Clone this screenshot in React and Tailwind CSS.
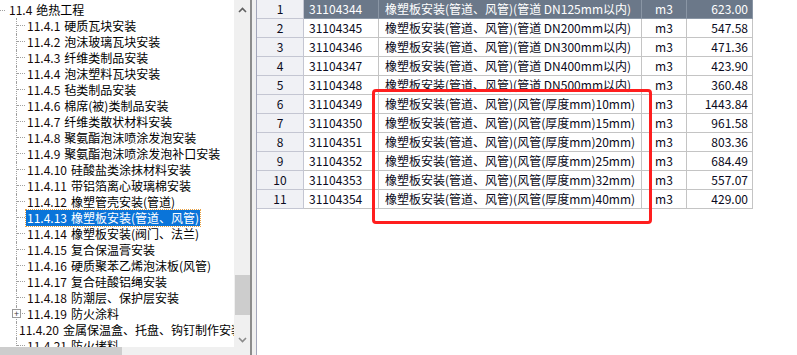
import React from "react";

const treeItems = [
    ["11.4.1", "硬质瓦块安装"],
    ["11.4.2", "泡沫玻璃瓦块安装"],
    ["11.4.3", "纤维类制品安装"],
    ["11.4.4", "泡沫塑料瓦块安装"],
    ["11.4.5", "毡类制品安装"],
    ["11.4.6", "棉席(被)类制品安装"],
    ["11.4.7", "纤维类散状材料安装"],
    ["11.4.8", "聚氨酯泡沫喷涂发泡安装"],
    ["11.4.9", "聚氨酯泡沫喷涂发泡补口安装"],
    ["11.4.10", "硅酸盐类涂抹材料安装"],
    ["11.4.11", "带铝箔离心玻璃棉安装"],
    ["11.4.12", "橡塑管壳安装(管道)"],
    ["11.4.13", "橡塑板安装(管道、风管)"],
    ["11.4.14", "橡塑板安装(阀门、法兰)"],
    ["11.4.15", "复合保温膏安装"],
    ["11.4.16", "硬质聚苯乙烯泡沫板(风管)"],
    ["11.4.17", "复合硅酸铝绳安装"],
    ["11.4.18", "防潮层、保护层安装"],
    ["11.4.19", "防火涂料"],
    ["11.4.20", "金属保温盒、托盘、钩钉制作安装"],
    ["11.4.21", "防火堵料"],
];

const base = "橡塑板安装(管道、风管)";
const rows = [
    [1, "31104344", base + "(管道 DN125mm以内)", "623.00"],
    [2, "31104345", base + "(管道 DN200mm以内)", "547.58"],
    [3, "31104346", base + "(管道 DN300mm以内)", "471.36"],
    [4, "31104347", base + "(管道 DN400mm以内)", "423.90"],
    [5, "31104348", base + "(管道 DN500mm以内)", "360.48"],
    [6, "31104349", base + "(风管(厚度mm)10mm)", "1443.84"],
    [7, "31104350", base + "(风管(厚度mm)15mm)", "961.58"],
    [8, "31104351", base + "(风管(厚度mm)20mm)", "803.36"],
    [9, "31104352", base + "(风管(厚度mm)25mm)", "684.49"],
    [10, "31104353", base + "(风管(厚度mm)32mm)", "557.07"],
    [11, "31104354", base + "(风管(厚度mm)40mm)", "429.00"],
];

function TreeRow({ code, name, selected, expandable }) {
    return (
        <div className="flex h-[16px] items-stretch">
            <div className="relative ml-[16px] flex w-[9px] flex-col border-l border-dotted border-[#a0a0a0]">
                <div className="h-[8px] border-b border-dotted border-[#a0a0a0]"></div>
                {expandable && (
                    <div className="absolute left-[-5px] top-[3px] flex h-[9px] w-[9px] items-center justify-center border border-[#9a9a9a] bg-white text-[9px] leading-none text-[#404040]">
                        +
                    </div>
                )}
            </div>
            <div
                className={
                    selected
                        ? "ml-[1px] flex items-center whitespace-nowrap bg-[#0a74d9] px-[1px] text-white outline outline-1 outline-dotted outline-[#e8a040]"
                        : "ml-[2px] flex items-center whitespace-nowrap text-[#140808]"
                }
            >
                <span>{code}</span>
                <span className={selected ? "ml-[4px] text-white" : "ml-[4px] text-black"}>{name}</span>
            </div>
        </div>
    );
}

function App() {
    return (
        <div className="flex h-[355px] w-[797px] overflow-hidden bg-white font-['Noto_Sans_CJK_SC',sans-serif] text-[12px] leading-none">
            {/* left tree panel */}
            <div className="flex w-[250px] flex-col">
                <div className="flex min-h-0 flex-1">
                    <div className="w-[234px] overflow-hidden pt-[2px]">
                        <div className="flex h-[16px] items-center">
                            <div className="w-[5px] border-b border-dotted border-[#a0a0a0]"></div>
                            <span className="ml-[4px] whitespace-nowrap text-[#140808]">11.4</span>
                            <span className="ml-[4px] whitespace-nowrap text-black">绝热工程</span>
                        </div>
                        {treeItems.map(([code, name]) => (
                            <TreeRow
                                key={code}
                                code={code}
                                name={name}
                                selected={code === "11.4.13"}
                                expandable={code === "11.4.19"}
                            />
                        ))}
                    </div>
                    <div className="flex w-[16px] flex-col items-center bg-[#f0f0f0]">
                        <svg width="9" height="6" viewBox="0 0 9 6" className="mt-[7px]">
                            <polyline points="1,5 4.5,1.5 8,5" fill="none" stroke="#606060" strokeWidth="1.6" />
                        </svg>
                        <div className="mt-[262px] h-[40px] w-[15px] bg-[#cdcdcd]"></div>
                        <svg width="9" height="6" viewBox="0 0 9 6" className="mt-[22px]">
                            <polyline points="1,1 4.5,4.5 8,1" fill="none" stroke="#8a8a8a" strokeWidth="1.6" />
                        </svg>
                    </div>
                </div>
                <div className="flex h-[8px] bg-[#f0f0f0]">
                    <div className="w-[122px] bg-[#cdcdcd]"></div>
                </div>
            </div>

            {/* splitter */}
            <div className="w-[7px] border-l-2 border-r border-l-[#8c8c8c] border-r-[#a3a6ba] bg-[#f0f0f0]"></div>

            {/* table */}
            <div className="relative flex-1">
                <div className="flex flex-col">
                    {rows.map(([no, code, name, price]) => {
                        const sel = no === 1;
                        const cell = sel
                            ? "border-r border-b border-[#8a96a5] bg-[#6b7889] text-white"
                            : "border-r border-b border-[#c4c4c4] text-[#0a0a20]";
                        return (
                            <div key={no} className="flex h-[19px]">
                                <div className="flex w-[47px] items-center justify-center border-r border-b border-[#c4c6d2] bg-[#f0f1f5] text-[#0a0a20]">
                                    {no}
                                </div>
                                <div className={"flex w-[75px] items-center pl-[5px] " + cell}>{code}</div>
                                <div className={"flex w-[263px] items-center whitespace-nowrap pl-[6px] " + cell}>{name}</div>
                                <div className={"flex w-[45px] items-center justify-center " + cell}>m3</div>
                                <div className={"flex w-[66px] items-center justify-end pr-[4px] " + cell}>{price}</div>
                            </div>
                        );
                    })}
                </div>
                <div className="absolute left-[115px] top-[89px] h-[135px] w-[280px] rounded-[4px] border-[3px] border-[#ff1e1e]"></div>
            </div>
        </div>
    );
}

export default App;
